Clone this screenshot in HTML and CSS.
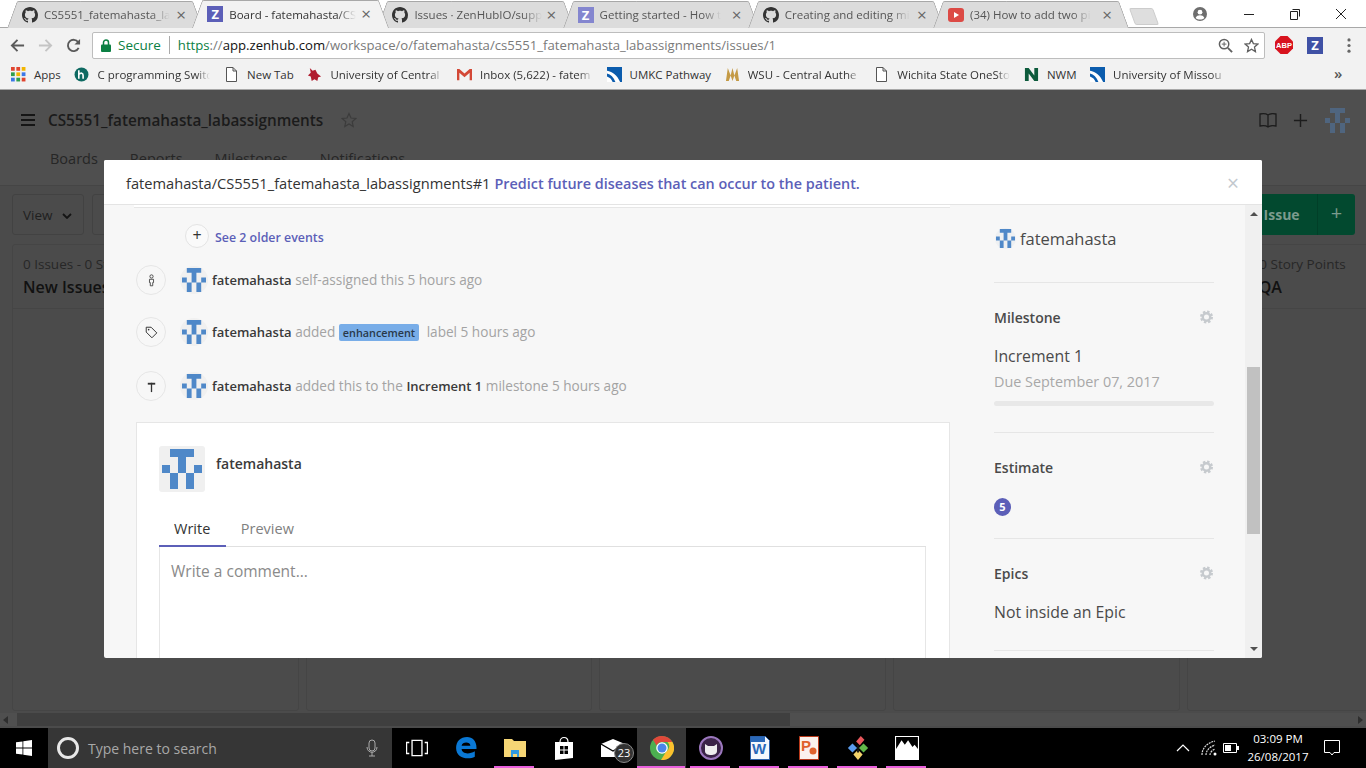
FILE: index.html
```html
<!DOCTYPE html>
<html lang="en">
<head>
    <meta charset="UTF-8">
    <title>Board - fatemahasta/CS5551_fatemahasta_labassignments</title>
    <link rel="stylesheet" href="styles.css">
</head>
<body>
    <!-- shared icons -->
    <svg class="sprite" xmlns="http://www.w3.org/2000/svg">
        <symbol id="i-github" viewBox="0 0 16 16"><path d="M8 0C3.58 0 0 3.58 0 8c0 3.54 2.29 6.53 5.47 7.59.4.07.55-.17.55-.38 0-.19-.01-.82-.01-1.49-2.01.37-2.53-.49-2.69-.94-.09-.23-.48-.94-.82-1.13-.28-.15-.68-.52-.01-.53.63-.01 1.08.58 1.23.82.72 1.21 1.87.87 2.33.66.07-.52.28-.87.51-1.07-1.78-.2-3.64-.89-3.64-3.95 0-.87.31-1.59.82-2.15-.08-.2-.36-1.02.08-2.12 0 0 .67-.21 2.2.82.64-.18 1.32-.27 2-.27.68 0 1.36.09 2 .27 1.53-1.04 2.2-.82 2.2-.82.44 1.1.16 1.92.08 2.12.51.56.82 1.27.82 2.15 0 3.07-1.87 3.75-3.65 3.95.29.25.54.73.54 1.48 0 1.07-.01 1.93-.01 2.2 0 .21.15.46.55.38A8.013 8.013 0 0016 8c0-4.42-3.58-8-8-8z"/></symbol>
        <symbol id="i-ident" viewBox="0 0 5 5"><path d="M1 0h3v1H3v2H2V1H1zM0 2h1v1H0zM4 2h1v1H4zM1 3h1v2H1zM3 3h1v2H3z" fill="#4f88c8"/></symbol>
        <symbol id="i-gear" viewBox="0 0 14 14"><circle cx="7" cy="7" r="4" fill="none" stroke="#c6cace" stroke-width="2.6"/><circle cx="7" cy="7" r="5.8" fill="none" stroke="#c6cace" stroke-width="2.4" stroke-dasharray="2.6 1.95"/></symbol>
        <symbol id="i-doc" viewBox="0 0 12 15"><path d="M1 .5h6.5L11 4v10.5H1zM7.5.5V4H11" fill="#fff" stroke="#555"/></symbol>
        <symbol id="i-umkc" viewBox="0 0 16 16"><rect width="16" height="16" fill="#0b5cad"/><path d="M0 4c6 1 11 5 14 12h-5C7 11 4 8 0 7zM0 10c3 1 5 3 6 6H0z" fill="#fff"/></symbol>
    </svg>

    <div class="tabstrip">
        <div class="tab">
            <svg class="fav"><use href="#i-github"/></svg>
            <span class="tab-title">CS5551_fatemahasta_la</span>
            <span class="tab-x">&times;</span>
        </div>
        <div class="tab tab-active">
            <span class="fav fav-z">Z</span>
            <span class="tab-title">Board - fatemahasta/CS</span>
            <span class="tab-x">&times;</span>
        </div>
        <div class="tab">
            <svg class="fav"><use href="#i-github"/></svg>
            <span class="tab-title">Issues · ZenHubIO/supp</span>
            <span class="tab-x">&times;</span>
        </div>
        <div class="tab">
            <span class="fav fav-z fav-light">Z</span>
            <span class="tab-title">Getting started - How t</span>
            <span class="tab-x">&times;</span>
        </div>
        <div class="tab">
            <svg class="fav"><use href="#i-github"/></svg>
            <span class="tab-title">Creating and editing mi</span>
            <span class="tab-x">&times;</span>
        </div>
        <div class="tab">
            <svg class="fav" viewBox="0 0 16 16"><rect y="1" width="16" height="14" rx="3" fill="#dc4a45"/><path d="M6 5l5 3-5 3z" fill="#fff"/></svg>
            <span class="tab-title">(34) How to add two pi</span>
            <span class="tab-x">&times;</span>
        </div>
        <div class="tab-new"></div>
        <div class="win-controls">
            <svg class="win-user" viewBox="0 0 14 14"><circle cx="7" cy="7" r="7" fill="#6e6e6e"/><circle cx="7" cy="5.2" r="2.4" fill="#fff"/><path d="M2.6 11c.8-2 2.5-2.7 4.4-2.7s3.6.7 4.4 2.7c-2.4 2-6.4 2-8.8 0z" fill="#fff"/></svg>
            <svg class="win-btn" viewBox="0 0 46 14"><path d="M18 7.5h10" stroke="#222"/></svg>
            <svg class="win-btn" viewBox="0 0 46 14"><path d="M20.5 2.500h7v7M18.5 4.500h7v8h-7z" fill="none" stroke="#222"/></svg>
            <svg class="win-btn" viewBox="0 0 46 14"><path d="M18 2l10 10M28 2L18 12" stroke="#222"/></svg>
        </div>
    </div>

    <div class="toolbar">
        <svg class="nav-icon" viewBox="0 0 16 16"><path d="M15 8H2M8 2L2 8l6 6" fill="none" stroke="#5a5a5a" stroke-width="2"/></svg>
        <svg class="nav-icon" viewBox="0 0 16 16"><path d="M1 8h13M8 2l6 6-6 6" fill="none" stroke="#c4c4c4" stroke-width="2"/></svg>
        <svg class="nav-icon" viewBox="0 0 16 16"><path d="M13.5 10.5A6 6 0 1 1 13 4.5" fill="none" stroke="#5a5a5a" stroke-width="2"/><path d="M15 1v6H9z" fill="#5a5a5a"/></svg>
        <div class="omnibox">
            <svg class="lock" viewBox="0 0 10 13"><path d="M2.5 6V3.500a2.500 2.500 0 0 1 5 0V6" fill="none" stroke="#0b8043" stroke-width="1.5"/><rect y="5.5" width="10" height="7.5" rx="1" fill="#0b8043"/></svg>
            <span class="secure">Secure</span>
            <span class="omni-sep"></span>
            <span class="url"><span class="url-https">https</span>://<span class="url-host">app.zenhub.com</span>/workspace/o/fatemahasta/cs5551_fatemahasta_labassignments/issues/1</span>
            <svg class="omni-icon" viewBox="0 0 16 16"><circle cx="6.5" cy="6.5" r="5" fill="none" stroke="#5f5f5f" stroke-width="1.6"/><path d="M10.5 10.5L15 15" stroke="#5f5f5f" stroke-width="2"/><path d="M4 6.5h5M6.500 4v5" stroke="#5f5f5f"/></svg>
            <svg class="omni-icon" viewBox="0 0 16 16"><path d="M8 1.500l2 4.500 4.800.5-3.600 3.200 1 4.800L8 12l-4.200 2.500 1-4.800L1.200 6.500 6 6z" fill="none" stroke="#5f5f5f" stroke-width="1.4"/></svg>
        </div>
        <svg class="abp" viewBox="0 0 18 18"><path d="M5.5 0h7L18 5.500v7L12.500 18h-7L0 12.500v-7z" fill="#d8131e"/><text x="9" y="11.800" text-anchor="middle" class="abp-text">ABP</text></svg>
        <span class="ext-z">Z</span>
        <svg class="menu-dots" viewBox="0 0 4 16"><circle cx="2" cy="2" r="1.7"/><circle cx="2" cy="8" r="1.7"/><circle cx="2" cy="14" r="1.7"/></svg>
    </div>

    <div class="bookmarks">
        <div class="bm">
            <svg class="bm-icon" viewBox="0 0 14 14"><g fill="#e0452f"><rect width="3.5" height="3.5"/><rect x="5" width="3.5" height="3.5"/></g><rect x="10" width="3.5" height="3.5" fill="#f2b600"/><rect y="5" width="3.5" height="3.5" fill="#2f9e4f"/><rect x="5" y="5" width="3.5" height="3.5" fill="#f2b600"/><rect x="10" y="5" width="3.5" height="3.5" fill="#3b78e7"/><rect y="10" width="3.5" height="3.5" fill="#3b78e7"/><rect x="5" y="10" width="3.5" height="3.5" fill="#2f9e4f"/><rect x="10" y="10" width="3.5" height="3.5" fill="#e0452f"/></svg>
            <span>Apps</span>
        </div>
        <div class="bm">
            <svg class="bm-icon" viewBox="0 0 14 14"><circle cx="7" cy="7" r="6.5" fill="#0f6a62"/><path d="M4.5 11V3M4.500 7c2-2 4-1.500 4 1v3" fill="none" stroke="#fff" stroke-width="1.5"/></svg>
            <span class="bm-fade">C programming Switc</span>
        </div>
        <div class="bm">
            <svg class="bm-icon" viewBox="0 0 14 15"><use href="#i-doc"/></svg>
            <span>New Tab</span>
        </div>
        <div class="bm">
            <svg class="bm-icon" viewBox="0 0 16 16"><path d="M3 1l3 3 3-1 2 4 4 3-3 1-1 4-3-2-3 2-1-5-3-1 3-3z" fill="#b01c2e"/></svg>
            <span class="bm-fade">University of Central</span>
        </div>
        <div class="bm">
            <svg class="bm-icon" viewBox="0 0 16 14"><path d="M0 1h2.500L8 6l5.500-5H16v12h-2.500V5L8 10 2.500 5v8H0z" fill="#d34836"/></svg>
            <span class="bm-fade">Inbox (5,622) - fatem</span>
        </div>
        <div class="bm">
            <svg class="bm-icon" viewBox="0 0 16 16"><use href="#i-umkc"/></svg>
            <span>UMKC Pathway</span>
        </div>
        <div class="bm">
            <svg class="bm-icon" viewBox="0 0 16 16"><path d="M1 15L3 1l3 8 2-8 2 8 3-8 2 14h-3L10 9l-2 6-2-6-2 6z" fill="#c49a45"/></svg>
            <span class="bm-fade">WSU - Central Authe</span>
        </div>
        <div class="bm">
            <svg class="bm-icon" viewBox="0 0 14 15"><use href="#i-doc"/></svg>
            <span class="bm-fade">Wichita State OneSto</span>
        </div>
        <div class="bm">
            <svg class="bm-icon" viewBox="0 0 16 16"><path d="M1 1h4l6 8V1h4v14h-4L5 7v8H1z" fill="#0d5b3c"/></svg>
            <span>NWM</span>
        </div>
        <div class="bm">
            <svg class="bm-icon" viewBox="0 0 16 16"><use href="#i-umkc"/></svg>
            <span class="bm-fade">University of Missou</span>
        </div>
        <span class="bm-more">&raquo;</span>
    </div>

    <div class="page">
        <div class="board-head">
            <div class="repo-row">
                <svg class="burger" viewBox="0 0 14 14"><path d="M0 2h14M0 7h14M0 12h14" stroke="#151515" stroke-width="2"/></svg>
                <span class="repo-name">CS5551_fatemahasta_labassignments</span>
                <svg class="repo-star" viewBox="0 0 16 16"><path d="M8 1.500l2 4.500 4.800.5-3.600 3.200 1 4.800L8 12l-4.200 2.500 1-4.800L1.200 6.500 6 6z" fill="none" stroke="#3c3c3c" stroke-width="1.2"/></svg>
                <svg class="head-icon head-book" viewBox="0 0 18 16"><path d="M9 3C7 1.500 4 1.500 1 2v12c3-.5 6-.5 8 1 2-1.500 5-1.500 8-1V2c-3-.5-6-.5-8 1zv12" fill="none" stroke="#1c1c1c" stroke-width="1.3"/></svg>
                <svg class="head-icon" viewBox="0 0 16 16"><path d="M8 1v14M1 8h14" stroke="#1c1c1c" stroke-width="1.5"/></svg>
                <svg class="head-avatar"><use href="#i-ident"/></svg>
            </div>
            <nav class="board-nav">
                <span>Boards</span>
                <span>Reports</span>
                <span>Milestones</span>
                <span>Notifications</span>
            </nav>
        </div>
        <div class="board-tools">
            <div class="tool-btn">View <svg class="chev" viewBox="0 0 10 6"><path d="M1 1l4 4 4-4" fill="none" stroke="#141414" stroke-width="1.8"/></svg></div>
            <div class="tool-btn tool-filter"></div>
            <div class="new-issue"><span class="new-issue-label">New Issue</span><span class="new-issue-add">+</span></div>
        </div>
        <div class="columns">
            <div class="column">
                <div class="column-head">
                    <div class="column-count">0 Issues - 0 Story Points</div>
                    <div class="column-name">New Issues</div>
                </div>
            </div>
            <div class="column"></div>
            <div class="column"></div>
            <div class="column"></div>
            <div class="column">
                <div class="column-head">
                    <div class="column-count">0 Issues - 0 Story Points</div>
                    <div class="column-name">Review/QA</div>
                </div>
            </div>
        </div>
        <div class="hscroll">
            <span class="hscroll-left"></span>
            <div class="hscroll-thumb"></div>
            <span class="hscroll-right"></span>
        </div>

        <!-- issue modal -->
        <div class="modal">
            <div class="modal-head">
                <span>fatemahasta/CS5551_fatemahasta_labassignments#1</span>
                <span class="modal-title">Predict future diseases that can occur to the patient.</span>
                <span class="modal-close">&times;</span>
            </div>
            <div class="modal-body">
                <div class="timeline">
                    <div class="card-stub"></div>
                    <div class="older">
                        <span class="older-btn">+</span>
                        <span class="older-text">See 2 older events</span>
                    </div>
                    <div class="event event-first">
                        <span class="event-icon"><svg viewBox="0 0 12 16" class="event-svg"><circle cx="6" cy="3" r="2" fill="none" stroke="#333"/><path d="M3.5 6.500h5v4H7.500v4h-3v-4H3.500z" fill="none" stroke="#333"/></svg></span>
                        <span class="avatar-sm"><svg><use href="#i-ident"/></svg></span>
                        <span class="event-text"><b>fatemahasta</b> self-assigned this 5 hours ago</span>
                    </div>
                    <div class="event event-second">
                        <span class="event-icon"><svg viewBox="0 0 16 16" class="event-svg"><path d="M1.5 1.500h6l7 7-6 6-7-7z" fill="none" stroke="#333" stroke-width="1.2"/><circle cx="4.5" cy="4.5" r="1" fill="#333"/></svg></span>
                        <span class="avatar-sm"><svg><use href="#i-ident"/></svg></span>
                        <span class="event-text"><b>fatemahasta</b> added <span class="label">enhancement</span> label 5 hours ago</span>
                    </div>
                    <div class="event event-third">
                        <span class="event-icon"><svg viewBox="0 0 14 14" class="event-svg"><path d="M3 3h8v2H3z" fill="#333"/><path d="M7 3v10" stroke="#333" stroke-width="1.4"/></svg></span>
                        <span class="avatar-sm"><svg><use href="#i-ident"/></svg></span>
                        <span class="event-text"><b>fatemahasta</b> added this to the <b>Increment 1</b> milestone 5 hours ago</span>
                    </div>
                    <div class="comment">
                        <div class="comment-user">
                            <span class="avatar-lg"><svg><use href="#i-ident"/></svg></span>
                            <span class="comment-name">fatemahasta</span>
                        </div>
                        <div class="comment-tabs">
                            <span class="comment-tab comment-tab-on">Write</span>
                            <span class="comment-tab">Preview</span>
                        </div>
                        <div class="comment-box">Write a comment...</div>
                    </div>
                </div>
                <aside class="sidebar">
                    <div class="side-sec side-user">
                        <span class="avatar-side"><svg><use href="#i-ident"/></svg></span>
                        <span class="side-user-name">fatemahasta</span>
                    </div>
                    <div class="side-sec side-milestone">
                        <div class="side-title">Milestone <svg class="gear"><use href="#i-gear"/></svg></div>
                        <div class="side-value">Increment 1</div>
                        <div class="side-due">Due September 07, 2017</div>
                        <div class="side-bar"></div>
                    </div>
                    <div class="side-sec side-estimate">
                        <div class="side-title">Estimate <svg class="gear"><use href="#i-gear"/></svg></div>
                        <span class="badge">5</span>
                    </div>
                    <div class="side-sec side-epics">
                        <div class="side-title">Epics <svg class="gear"><use href="#i-gear"/></svg></div>
                        <div class="side-value">Not inside an Epic</div>
                    </div>
                </aside>
                <div class="vscroll">
                    <span class="vscroll-up"></span>
                    <div class="vscroll-track"><div class="vscroll-thumb"></div></div>
                    <span class="vscroll-down"></span>
                </div>
            </div>
        </div>
    </div>

    <div class="taskbar">
        <div class="start">
            <svg class="start-icon" viewBox="0 0 16 16"><path d="M0 2.300l6.500-.9v6.200H0zM7.300 1.300L16 0v7.600H7.300zM0 8.400h6.500v6.200L0 13.700zM7.300 8.400H16V16l-8.700-1.200z" fill="#fff"/></svg>
        </div>
        <div class="search">
            <span class="cortana"></span>
            <span class="search-text">Type here to search</span>
            <svg class="search-mic" viewBox="0 0 12 18"><rect x="3" y="1" width="6" height="11" rx="3" fill="none" stroke="#aaa"/><path d="M1 8c0 7 10 7 10 0M6 13v4M3 17h6" fill="none" stroke="#aaa"/></svg>
        </div>
        <div class="task">
            <svg viewBox="0 0 20 16" class="task-svg"><path d="M5.5 1h9v14h-9zM3 3H.5v10H3M17 3h2.500v10H17" fill="none" stroke="#fff" stroke-width="1.2"/></svg>
        </div>
        <div class="task">
            <svg viewBox="0 0 20 20" class="task-svg"><path d="M1 10C1 4 5 0 11 0c5 0 9 4 8.500 11H6c.3 4.500 7 5 12 2v5c-6 3-17 1.500-17-8zM6 8h8c0-4-7.500-4-8 0z" fill="#0a78d4"/></svg>
        </div>
        <div class="task task-run">
            <svg viewBox="0 0 22 22" class="task-svg"><path d="M0 2h8l2 2h12v16H0z" fill="#f6d675"/><path d="M7 13h8v7h-2v-3H9v3H7z" fill="#2f9ae0"/></svg>
        </div>
        <div class="task">
            <svg viewBox="0 0 20 24" class="task-svg task-tall"><path d="M1 6h18v16L1 24z" fill="#fff"/><path d="M6 6c0-6 8-6 8 0" fill="none" stroke="#fff" stroke-width="1.2"/><path d="M6 10h3.500v3.500H6zM10.500 10H14v3.500h-3.500zM6 14.500h3.500V18H6zM10.500 14.500H14V18h-3.500z" fill="#000"/></svg>
        </div>
        <div class="task">
            <svg viewBox="0 0 24 18" class="task-svg task-wide"><path d="M0 5l12-5 12 5v13H0z" fill="#fff"/><path d="M0 5l12 7 12-7" fill="none" stroke="#000" stroke-width="1.2"/></svg>
            <span class="mail-badge">23</span>
        </div>
        <div class="task task-run task-on">
            <svg viewBox="0 0 24 24" class="task-svg task-big"><circle cx="12" cy="12" r="12" fill="#4caf50"/><path d="M12 0a12 12 0 0 1 10.400 6H12a6 6 0 0 0-5.400 3.400L3 3.800A12 12 0 0 1 12 0z" fill="#e0483a"/><path d="M22.400 6A12 12 0 0 1 11 24l5.200-8.500A6 6 0 0 0 17.500 6z" fill="#fbc02d"/><circle cx="12" cy="12" r="5.800" fill="#fff"/><circle cx="12" cy="12" r="4.500" fill="#4a85e8"/></svg>
        </div>
        <div class="task task-run">
            <svg viewBox="0 0 24 24" class="task-svg task-big"><circle cx="12" cy="12" r="11" fill="#3a2347" stroke="#9b77bd" stroke-width="2"/><path d="M6 8l3 2h6l3-2v7c0 3-3 4-6 4s-6-1-6-4z" fill="#eee"/></svg>
        </div>
        <div class="task task-run">
            <svg viewBox="0 0 22 24" class="task-svg task-big"><path d="M1.500 .5h15l4 4v19h-19z" fill="#f4f7fc" stroke="#2a5fa8"/><path d="M2 1h14v5H2z" fill="#2a68b8"/><text x="10" y="18" text-anchor="middle" class="doc-letter word-letter">W</text></svg>
        </div>
        <div class="task task-run">
            <svg viewBox="0 0 22 24" class="task-svg task-big"><path d="M1.500 .5h19v23h-19z" fill="#fbf1ec" stroke="#b8391a"/><text x="8" y="15" text-anchor="middle" class="doc-letter ppt-letter">P</text><circle cx="15" cy="15" r="3.500" fill="#e0622d"/></svg>
        </div>
        <div class="task task-run">
            <svg viewBox="0 0 24 26" class="task-svg task-big"><path d="M15 0l4 4-5 6-4-4z" fill="#e8575c"/><path d="M6 8l5 5-5 5-5-5z" fill="#5b9bec"/><path d="M18 8l5 5-5 5-5-5z" fill="#62b84a"/><path d="M12 15l5 5-5 6-5-6z" fill="#f3d36b"/><path d="M12 10v8" stroke="#111" stroke-width="2"/></svg>
        </div>
        <div class="task task-run">
            <svg viewBox="0 0 22 22" class="task-svg task-big"><rect width="22" height="22" fill="#fff"/><path d="M1 1h20v11l-3-4-2 2-4-6-3 4-3-4-5 8z" fill="#000"/></svg>
        </div>
        <div class="tray">
            <svg class="tray-chevron" viewBox="0 0 14 8"><path d="M1 7l6-6 6 6" fill="none" stroke="#fff" stroke-width="1.2"/></svg>
            <svg class="tray-wifi" viewBox="0 0 16 16"><path d="M1 15C1 8 6 3 14 1M5 15c0-4 3-8 9-10M9 15c0-2 2-5 5-6" fill="none" stroke="#ddd" stroke-width="1.2" stroke-dasharray="2 .8"/><circle cx="14" cy="14" r="1.5" fill="#fff"/></svg>
            <svg class="tray-batt" viewBox="0 0 16 10"><path d="M.5.500h13v9H.5z" fill="none" stroke="#fff"/><rect x="2" y="2" width="6" height="6" fill="#fff"/><rect x="14" y="3" width="2" height="4" fill="#fff"/></svg>
            <div class="clock">
                <div>03:09 PM</div>
                <div>26/08/2017</div>
            </div>
            <svg class="tray-note" viewBox="0 0 16 16"><path d="M.5.500h15v12H10l-2 2.500-2-2.500H.5z" fill="none" stroke="#fff"/></svg>
        </div>
    </div>
</body>
</html>
```
FILE: styles.css
```css
* {
    box-sizing: border-box;
}

html, body {
    margin: 0;
    padding: 0;
    height: 768px;
    overflow: hidden;
}

body {
    width: 1366px;
    display: flex;
    flex-direction: column;
    font-family: "Open Sans", Arial, sans-serif;
    background: #4b4b4b;
}

svg {
    display: block;
    flex: none;
}

.sprite {
    display: none;
}

/* tab strip */
.tabstrip {
    height: 28px;
    flex: none;
    display: flex;
    align-items: flex-end;
    padding-left: 12px;
    background: linear-gradient(#fff 0, #fff 27px, #a8a8a8 27px);
    position: relative;
}

.tab {
    position: relative;
    z-index: 0;
    width: 186px;
    height: 27px;
    margin-right: -0.8px;
    display: flex;
    align-items: center;
    padding: 0 10px 0 10px;
    font-size: 11.5px;
    color: #555;
}

.tab::before, .tab::after {
    content: "";
    position: absolute;
    top: 0;
    bottom: 0;
    width: 60%;
    z-index: -1;
    background: #dcdcdc;
    border-top: 1px solid #a8a8a8;
}

.tab::before {
    left: 0;
    border-left: 1px solid #a8a8a8;
    border-radius: 2px 0 0 0;
    transform: skewX(-20deg);
}

.tab::after {
    right: 0;
    border-right: 1px solid #a8a8a8;
    border-radius: 0 2px 0 0;
    transform: skewX(20deg);
}

.tab-active {
    z-index: 2;
    height: 28px;
    color: #333;
}

.tab-active::before, .tab-active::after {
    background: #f2f2f2;
}

.fav {
    width: 16px;
    height: 16px;
    flex: none;
    fill: #333;
    margin-right: 6px;
}

.fav-z {
    background: #5c5fb8;
    color: #fff;
    font-size: 13px;
    font-weight: 700;
    line-height: 16px;
    text-align: center;
}

.fav-light {
    background: #8486cf;
}

.tab-title {
    white-space: nowrap;
    -webkit-mask-image: linear-gradient(to right, #000 85%, transparent);
    mask-image: linear-gradient(to right, #000 85%, transparent);
}

.tab-x {
    width: 14px;
    margin-left: auto;
    font-size: 17px;
    line-height: 16px;
    text-align: center;
    color: #666;
    flex: none;
}

.tab-new {
    width: 24px;
    height: 17px;
    margin: 0 0 3px 9px;
    flex: none;
    align-self: flex-end;
    background: #dedede;
    border: 1px solid #ccc;
    border-radius: 2px;
    transform: skewX(20deg);
}

.win-controls {
    margin-left: auto;
    height: 27px;
    align-self: flex-start;
    display: flex;
    align-items: center;
    padding-right: 2px;
}

.win-user {
    width: 14px;
    height: 14px;
    margin-right: 19px;
}

.win-btn {
    width: 46px;
    height: 14px;
}

/* toolbar */
.toolbar {
    height: 34px;
    flex: none;
    display: flex;
    align-items: center;
    padding: 0 10px;
    background: #f2f2f2;
}

.nav-icon {
    width: 15px;
    height: 15px;
    margin-right: 13px;
}

.omnibox {
    width: 1173px;
    height: 27px;
    margin-left: -2px;
    display: flex;
    align-items: center;
    padding: 0 5px 0 8px;
    background: #fff;
    border: 1px solid #bdbdbd;
    border-radius: 2px;
    font-size: 13.5px;
    white-space: nowrap;
}

.lock {
    width: 10px;
    height: 13px;
    margin-right: 7px;
}

.secure {
    color: #0b8043;
}

.omni-sep {
    width: 1px;
    height: 18px;
    margin: 0 8px;
    background: #aaa;
}

.url {
    flex: 1;
    font-size: 13.15px;
    color: #7a7a7a;
}

.url-https {
    color: #0b8043;
}

.url-host {
    color: #111;
}

.omni-icon {
    width: 15px;
    height: 15px;
    margin-left: 11px;
}

.abp {
    width: 18px;
    height: 18px;
    margin-left: 10px;
}

.abp-text {
    font: 700 7.5px "Liberation Sans", Arial, sans-serif;
    fill: #fff;
}

.ext-z {
    width: 16px;
    height: 17px;
    margin-left: 14px;
    background: #3f51a5;
    color: #fff;
    font-size: 13px;
    font-weight: 700;
    line-height: 17px;
    text-align: center;
}

.menu-dots {
    width: 4px;
    height: 15px;
    margin-left: 24px;
    fill: #666;
}

/* bookmarks */
.bookmarks {
    height: 28px;
    flex: none;
    display: flex;
    align-items: center;
    padding: 0 0 3px 11px;
    gap: 13.6px;
    background: #f2f2f2;
    border-bottom: 1px solid #a8a8a8;
    font-size: 11.5px;
    color: #333;
    position: relative;
}

.bm {
    display: flex;
    align-items: center;
    gap: 8px;
    white-space: nowrap;
}

.bm-icon {
    width: 15px;
    height: 15px;
}

.bm-fade {
    width: 113px;
    -webkit-mask-image: linear-gradient(to left, transparent, #000 14px);
    mask-image: linear-gradient(to left, transparent, #000 14px);
}

.bm-more {
    position: absolute;
    left: 1334px;
    top: 1px;
    font-size: 15px;
    font-weight: 600;
    color: #555;
}

/* dimmed board behind the modal */
.page {
    position: relative;
    height: 638px;
    flex: none;
    display: flex;
    flex-direction: column;
    background: #4b4b4b;
    overflow: hidden;
}

.board-head {
    height: 96px;
    flex: none;
    background: #4f4f4f;
    border-bottom: 1px solid #454545;
}

.repo-row {
    display: flex;
    align-items: center;
    height: 30px;
    margin-top: 15px;
    padding: 0 16px 0 21px;
}

.burger {
    width: 14px;
    height: 14px;
    margin-right: 13px;
}

.repo-name {
    font-size: 15.3px;
    font-weight: 600;
    color: #1b1b1b;
}

.repo-star {
    width: 16px;
    height: 16px;
    margin-left: 18px;
}

.head-icon {
    width: 15px;
    height: 15px;
    margin-left: 16px;
}

.head-book {
    width: 18px;
    height: 16px;
    margin-left: auto;
}

.head-avatar {
    width: 25px;
    height: 25px;
    margin-left: 17px;
    opacity: 0.4;
}

.board-nav {
    display: flex;
    gap: 32px;
    margin-top: 14px;
    padding-left: 50px;
    font-size: 14.5px;
    color: #262626;
}

.board-tools {
    display: flex;
    gap: 8px;
    height: 41px;
    margin-top: 8px;
    padding: 0 11px 0 12px;
    flex: none;
}

.tool-btn {
    width: 72px;
    display: flex;
    align-items: center;
    gap: 9px;
    padding-left: 10px;
    font-size: 13.5px;
    color: #1f1f1f;
    border: 1px solid #424242;
    border-radius: 3px;
}

.chev {
    width: 10px;
    height: 6px;
    margin-top: 2px;
}

.tool-filter {
    width: 300px;
}

.new-issue {
    margin-left: auto;
    width: 140px;
    display: flex;
    align-items: center;
    background: #02492f;
    border-radius: 3px;
    color: #7b9b8d;
    font-size: 14px;
    font-weight: 700;
}

.new-issue-label {
    flex: 1;
    padding-right: 4px;
    text-align: center;
}

.new-issue-add {
    width: 38px;
    height: 100%;
    border-left: 1px solid #013f28;
    font-size: 20px;
    font-weight: 400;
    line-height: 38px;
    text-align: center;
}

.columns {
    display: flex;
    gap: 7px;
    height: 467px;
    margin-top: 9px;
    padding-left: 12px;
    flex: none;
}

.column {
    width: 286.7px;
    flex: none;
    border: 1px solid #454545;
    border-radius: 3px;
}

.column-head {
    height: 64px;
    padding: 11px 0 0 10px;
    border-bottom: 1px solid #454545;
    white-space: nowrap;
    overflow: hidden;
}

.column-count {
    font-size: 13.5px;
    line-height: 17px;
    color: #272727;
}

.column-name {
    margin-top: 3px;
    font-size: 16px;
    font-weight: 600;
    line-height: 22px;
    color: #111;
}

.hscroll {
    position: absolute;
    left: 0;
    right: 0;
    bottom: 2px;
    height: 13px;
    display: flex;
    align-items: center;
    background: #4f4f4f;
}

.hscroll-thumb {
    width: 773px;
    height: 13px;
    margin-left: 9px;
    background: #3f3f3f;
}

.hscroll-left {
    margin-left: 3px;
    border-right: 5px solid #2e2e2e;
    border-top: 4px solid transparent;
    border-bottom: 4px solid transparent;
}

.hscroll-right {
    margin-left: auto;
    margin-right: 3px;
    border-left: 5px solid #2e2e2e;
    border-top: 4px solid transparent;
    border-bottom: 4px solid transparent;
}

/* issue modal */
.modal {
    position: absolute;
    left: 104px;
    top: 70px;
    width: 1158px;
    height: 498px;
    display: flex;
    flex-direction: column;
    background: #f7f7f7;
    border-radius: 2px;
    overflow: hidden;
}

.modal-head {
    height: 45px;
    flex: none;
    display: flex;
    align-items: center;
    gap: 4px;
    padding: 2px 23px 0 22px;
    background: #fff;
    border-bottom: 1px solid #e4e4e4;
    font-size: 14.65px;
    color: #333;
}

.modal-title {
    font-size: 14.4px;
    font-weight: 600;
    color: #5c5fb8;
}

.modal-close {
    margin-left: auto;
    font-size: 21px;
    line-height: 20px;
    color: #c2c8ce;
}

.modal-body {
    flex: 1;
    min-height: 0;
    display: flex;
}

.timeline {
    width: 846px;
    flex: none;
    padding-left: 32px;
    overflow: hidden;
}

.card-stub {
    height: 3px;
    margin-left: -2px;
    background: #fff;
    border-bottom: 1px solid #e6e6e6;
}

.older {
    display: flex;
    align-items: center;
    gap: 6px;
    margin: 16px 0 0 49px;
}

.older-btn {
    width: 24px;
    height: 24px;
    border: 1px solid #e4e4e4;
    border-radius: 50%;
    background: #fafafa;
    font-size: 16px;
    line-height: 21px;
    text-align: center;
    color: #333;
}

.older-text {
    padding-top: 2px;
    font-size: 12.4px;
    font-weight: 600;
    color: #5c5fb8;
}

.event {
    display: flex;
    align-items: center;
    height: 30px;
    font-size: 13.6px;
    color: #a3a3a3;
}

.event-first {
    margin-top: 17px;
}

.event-second {
    margin-top: 22px;
}

.event-third {
    margin-top: 24px;
}

.event-icon {
    width: 30px;
    height: 30px;
    flex: none;
    display: flex;
    align-items: center;
    justify-content: center;
    border: 1px solid #e6e6e6;
    border-radius: 50%;
}

.event-svg {
    width: 13px;
    height: 13px;
}

.avatar-sm {
    width: 28px;
    height: 28px;
    margin: 0 4px 0 14px;
    padding: 2px;
    background: #f0f0f0;
    border-radius: 50%;
}

.avatar-sm svg {
    width: 24px;
    height: 24px;
}

.event-text {
    padding-bottom: 2px;
}

.event-text b {
    font-size: 13px;
    font-weight: 600;
    color: #3a3a3a;
}

.label {
    display: inline-block;
    margin: 0 4px 0 0;
    padding: 0 4px;
    background: #78ade8;
    border-radius: 2px;
    font-size: 10.8px;
    font-weight: 600;
    line-height: 17px;
    color: #29394a;
}

.comment {
    width: 814px;
    height: 300px;
    margin-top: 21px;
    padding: 23px 23px 0 22px;
    background: #fff;
    border: 1px solid #e6e6e6;
}

.comment-user {
    display: flex;
    align-items: flex-start;
    gap: 11px;
}

.avatar-lg {
    width: 46px;
    height: 46px;
    padding: 3px;
    background: #f0f0f0;
    border-radius: 3px;
}

.avatar-lg svg {
    width: 40px;
    height: 40px;
}

.comment-name {
    margin-top: 8px;
    font-size: 14px;
    font-weight: 600;
    color: #3a3a3a;
}

.comment-tabs {
    display: flex;
    margin-top: 25px;
    height: 30px;
    border-bottom: 1px solid #e0e0e0;
    font-size: 14.5px;
}

.comment-tab {
    padding: 2px 15.5px 0 15px;
    color: #808080;
}

.comment-tab-on {
    color: #333;
    border-bottom: 2px solid #5c5fb8;
    height: 30px;
}

.comment-box {
    height: 200px;
    padding: 13px 11px;
    border: 1px solid #e6e6e6;
    border-top: none;
    font-size: 15.5px;
    color: #8a8a8a;
}

/* right hand details */
.sidebar {
    width: 220px;
    flex: none;
    margin-left: 44px;
    font-size: 15.8px;
    color: #4a4a4a;
}

.side-sec {
    border-bottom: 1px solid #e6e6e6;
}

.side-user {
    height: 78px;
    display: flex;
    align-items: flex-start;
    padding-top: 23px;
}

.avatar-side {
    width: 21px;
    height: 21px;
    margin-left: 1px;
    padding: 1px;
    background: #eef0f2;
    border-radius: 50%;
}

.avatar-side svg {
    width: 19px;
    height: 19px;
}

.side-user-name {
    margin-left: 4px;
    font-size: 16.5px;
    line-height: 21px;
}

.side-title {
    display: flex;
    justify-content: space-between;
    align-items: center;
    height: 20px;
    padding-right: 1px;
    font-size: 14px;
    font-weight: 600;
    color: #4a4a4a;
}

.gear {
    width: 13px;
    height: 14px;
}

.side-milestone {
    height: 150px;
    padding-top: 24px;
}

.side-value {
    margin-top: 18px;
    line-height: 22px;
}

.side-due {
    margin-top: 5px;
    font-size: 14.4px;
    line-height: 20px;
    color: #a8a8a8;
}

.side-bar {
    height: 5px;
    margin-top: 9px;
    background: #e8e8e8;
    border-radius: 3px;
}

.side-estimate {
    height: 106px;
    padding-top: 24px;
}

.badge {
    display: block;
    width: 17px;
    height: 18px;
    margin-top: 21px;
    background: #5c5fb8;
    border-radius: 50%;
    font-size: 11px;
    font-weight: 700;
    line-height: 18px;
    text-align: center;
    color: #fff;
}

.side-epics {
    height: 112px;
    padding-top: 24px;
}

.vscroll {
    width: 17px;
    margin-left: 31px;
    flex: none;
    display: flex;
    flex-direction: column;
    align-items: center;
    background: #f0f0f0;
}

.vscroll-up {
    margin-top: 7px;
    border-bottom: 4px solid #505050;
    border-left: 4px solid transparent;
    border-right: 4px solid transparent;
}

.vscroll-track {
    flex: 1;
    width: 100%;
    padding: 0 2px;
}

.vscroll-thumb {
    width: 13px;
    height: 167px;
    margin-top: 151px;
    background: #c1c1c1;
}

.vscroll-down {
    margin-bottom: 7px;
    border-top: 4px solid #505050;
    border-left: 4px solid transparent;
    border-right: 4px solid transparent;
}

/* windows taskbar */
.taskbar {
    height: 40px;
    flex: none;
    display: flex;
    background: #000;
    color: #fff;
}

.start {
    width: 48px;
    display: flex;
    align-items: center;
    justify-content: center;
}

.start-icon {
    width: 16px;
    height: 16px;
}

.search {
    width: 344px;
    display: flex;
    align-items: center;
    padding: 0 14px 0 9px;
    background: #363636;
    font-size: 14px;
    color: #a8a8a8;
}

.cortana {
    width: 22px;
    height: 22px;
    border: 3px solid #e8e8e8;
    border-radius: 50%;
}

.search-text {
    margin-left: 9px;
}

.search-mic {
    width: 12px;
    height: 18px;
    margin-left: auto;
}

.task {
    position: relative;
    width: 49px;
    display: flex;
    align-items: center;
    justify-content: center;
    flex: none;
}

.task-run::after {
    content: "";
    position: absolute;
    left: 4px;
    right: 5px;
    bottom: 0;
    height: 2px;
    background: #e85fdc;
}

.task-on {
    background: #383838;
}

.task-on::after {
    left: 0;
    right: 1px;
}

.task-svg {
    width: 22px;
    height: 22px;
}

.task-tall {
    height: 24px;
}

.task-wide {
    width: 24px;
    height: 18px;
}

.task-big {
    width: 24px;
    height: 24px;
}

.doc-letter {
    font-family: "Liberation Sans", Arial, sans-serif;
    font-weight: 700;
}

.word-letter {
    font-size: 15px;
    fill: #2a68b8;
}

.ppt-letter {
    font-size: 15px;
    fill: #e0622d;
}

.mail-badge {
    position: absolute;
    right: 3px;
    bottom: 5px;
    width: 20px;
    height: 20px;
    background: #333;
    border: 1px solid #888;
    border-radius: 50%;
    font-size: 11px;
    line-height: 18px;
    text-align: center;
}

.tray {
    flex: 1;
    display: flex;
    align-items: center;
    padding-left: 5px;
}

.tray-chevron {
    width: 14px;
    height: 8px;
    margin-left: 240px;
}

.tray-wifi {
    width: 16px;
    height: 16px;
    margin-left: 11px;
}

.tray-batt {
    width: 16px;
    height: 10px;
    margin-left: 6px;
}

.clock {
    width: 66px;
    margin-left: 6px;
    font-size: 11.5px;
    line-height: 18px;
    text-align: center;
}

.tray-note {
    width: 16px;
    height: 16px;
    margin-left: 13px;
}
```
